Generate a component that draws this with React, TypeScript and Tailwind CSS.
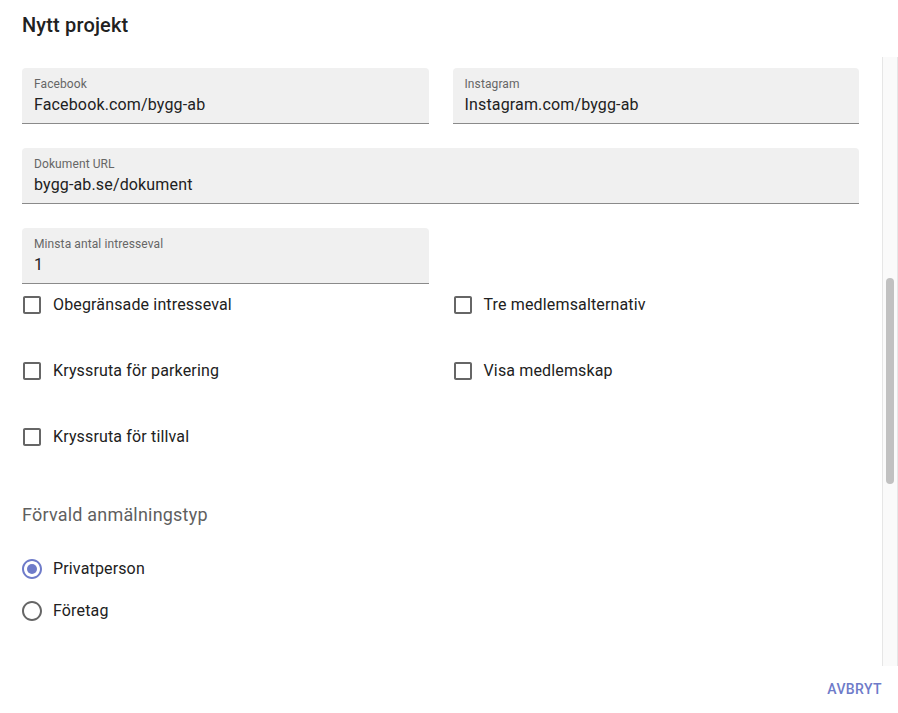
import React from "react";

function Field({ label, value }: { label: string; value: string }) {
  return (
    <div className="h-[56px] rounded-t-[4px] bg-[#f0f0f0] border-b border-[#8a8a8a] px-[12px] flex flex-col">
      <div className="pt-[8px] text-[12px] leading-[16px] tracking-[0.1px] text-[#666666]">{label}</div>
      <div className="mt-[1px] text-[16px] leading-[23px] tracking-[0.15px] text-[#212121]">{value}</div>
    </div>
  );
}

function Check({ label }: { label: string }) {
  return (
    <div className="flex items-center h-[42px] -ml-[11px]">
      <div className="w-[42px] h-[42px] flex items-center justify-center">
        <svg width="24" height="24" viewBox="0 0 24 24" fill="#666666">
          <path d="M19 5v14H5V5h14m0-2H5c-1.11 0-2 .9-2 2v14c0 1.1.89 2 2 2h14c1.1 0 2-.9 2-2V5c0-1.1-.9-2-2-2z" />
        </svg>
      </div>
      <span className="text-[16px] leading-[24px] tracking-[0.15px] text-[#212121]">{label}</span>
    </div>
  );
}

function Radio({ label, checked }: { label: string; checked?: boolean }) {
  const c = checked ? "#6e7bc9" : "#666666";
  return (
    <div className="flex items-center h-[42px] -ml-[11px]">
      <div className="w-[42px] h-[42px] flex items-center justify-center">
        <svg width="24" height="24" viewBox="0 0 24 24" fill={c}>
          <path d="M12 2C6.48 2 2 6.48 2 12s4.48 10 10 10 10-4.48 10-10S17.52 2 12 2zm0 18c-4.42 0-8-3.58-8-8s3.58-8 8-8 8 3.58 8 8-3.58 8-8 8z" />
          {checked && <circle cx="12" cy="12" r="5" />}
        </svg>
      </div>
      <span className="text-[16px] leading-[24px] tracking-[0.15px] text-[#212121]">{label}</span>
    </div>
  );
}

export default function App() {
  return (
    <div
      className="w-[898px] h-[713px] bg-white flex flex-col overflow-hidden"
      style={{ fontFamily: "Roboto, 'Noto Sans', sans-serif" }}
    >
      <div className="h-[57px] pl-[22px] pt-[9px]">
        <h2 className="text-[20px] leading-[32px] font-medium tracking-[0.15px] text-[#212121]">Nytt projekt</h2>
      </div>
      <div className="h-[609px] flex">
        <div className="w-[837px] ml-[22px] pt-[11px]">
          <div className="grid grid-cols-2 gap-x-[24px]">
            <Field label="Facebook" value="Facebook.com/bygg-ab" />
            <Field label="Instagram" value="Instagram.com/bygg-ab" />
          </div>
          <div className="mt-[24px]">
            <Field label="Dokument URL" value="bygg-ab.se/dokument" />
          </div>
          <div className="mt-[24px] grid grid-cols-2 gap-x-[24px]">
            <Field label="Minsta antal intresseval" value="1" />
          </div>
          <div className="grid grid-cols-2 gap-x-[24px] gap-y-[24px]">
            <Check label="Obegränsade intresseval" />
            <Check label="Tre medlemsalternativ" />
            <Check label="Kryssruta för parkering" />
            <Check label="Visa medlemskap" />
            <Check label="Kryssruta för tillval" />
          </div>
          <div className="mt-[43px] text-[18px] leading-[28px] tracking-[0.2px] text-[#5f5f5f]">Förvald anmälningstyp</div>
          <div className="mt-[19px] flex flex-col">
            <Radio label="Privatperson" checked />
            <Radio label="Företag" />
          </div>
        </div>
        <div className="ml-[23px] w-[16px] h-full bg-[#fafafa] border-l border-r border-[#e6e6e6] flex justify-center">
          <div className="mt-[221px] w-[8px] h-[206px] rounded-full bg-[#c1c1c1]" />
        </div>
      </div>
      <div className="flex-1 flex items-center justify-end pr-[8px]">
        <button className="px-[8px] h-[36px] text-[14px] font-medium tracking-[0.4px] text-[#6e7bc9] uppercase">
          Avbryt
        </button>
      </div>
    </div>
  );
}
